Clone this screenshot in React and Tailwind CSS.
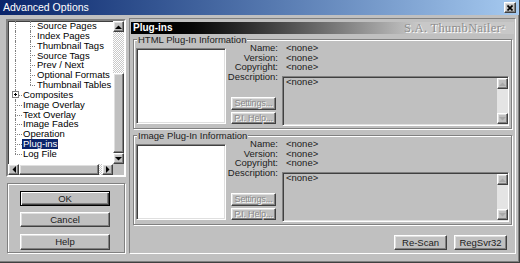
import React from "react";

const raised =
  "border border-t-white border-l-white border-r-[#404040] border-b-[#404040] shadow-[inset_-1px_-1px_0_#808080,inset_1px_1px_0_#dfdfdf]";
const sunken =
  "border border-t-[#808080] border-l-[#808080] border-r-white border-b-white shadow-[inset_1px_1px_0_#404040,inset_-1px_-1px_0_#dfdfdf]";
const etched = "border border-[#808080] shadow-[inset_1px_1px_0_#fff,1px_1px_0_#fff]";
const dither = "bg-[repeating-conic-gradient(#fff_0%_25%,#c8c8c8_0%_50%)] bg-size-[2px_2px]";

const tree = [
  { label: "Source Pages", child: true },
  { label: "Index Pages", child: true },
  { label: "Thumbnail Tags", child: true },
  { label: "Source Tags", child: true },
  { label: "Prev / Next", child: true },
  { label: "Optional Formats", child: true },
  { label: "Thumbnail Tables", child: true, lastChild: true },
  { label: "Composites", plus: true },
  { label: "Image Overlay" },
  { label: "Text Overlay" },
  { label: "Image Fades" },
  { label: "Operation" },
  { label: "Plug-ins", selected: true },
  { label: "Log File", last: true },
];

function Arrow({ dir, color = "#000" }) {
  const pts = {
    up: "0,4 3.5,0.5 7,4",
    down: "0,0 3.5,3.5 7,0",
    left: "4,0 0.5,3.5 4,7",
    right: "0,0 3.5,3.5 0,7",
  }[dir];
  const vertical = dir === "up" || dir === "down";
  return (
    <svg width={vertical ? 7 : 4} height={vertical ? 4 : 7} viewBox={vertical ? "0 0 7 4" : "0 0 4 7"}>
      <polygon points={pts} fill={color} />
    </svg>
  );
}

function ArrowBox({ dir, color }) {
  return (
    <div className={`flex h-[11px] w-[11px] shrink-0 items-center justify-center bg-[#c0c0c0] ${raised}`}>
      <Arrow dir={dir} color={color} />
    </div>
  );
}

function TreeRow({ item }) {
  return (
    <div className="flex h-[9.85px] items-center">
      <div className="relative h-full w-[15px] shrink-0">
        <span
          className={`absolute left-[7px] top-0 border-l border-dotted border-[#808080] ${item.last ? "h-1/2" : "h-full"}`}
        />
        {!item.child && (
          <span className="absolute left-[7px] top-1/2 w-[7px] border-t border-dotted border-[#808080]" />
        )}
        {item.plus && (
          <span className="absolute left-[4px] top-[1px] flex h-[7px] w-[7px] items-center justify-center border border-[#808080] bg-white">
            <span className="absolute h-px w-[3px] bg-black" />
            <span className="absolute h-[3px] w-px bg-black" />
          </span>
        )}
      </div>
      {item.child && (
        <div className="relative h-full w-[14px] shrink-0">
          <span
            className={`absolute left-[7px] top-0 border-l border-dotted border-[#808080] ${item.lastChild ? "h-1/2" : "h-full"}`}
          />
          <span className="absolute left-[7px] top-1/2 w-[5px] border-t border-dotted border-[#808080]" />
        </div>
      )}
      <span
        className={`whitespace-nowrap leading-[9.85px] ${item.selected ? "-ml-[1px] bg-[#0a246a] px-[1px] text-white" : "text-black"}`}
      >
        {item.label}
      </span>
    </div>
  );
}

function WinButton({ children, className = "", isDefault = false }) {
  const frame = isDefault
    ? "border border-black shadow-[inset_1px_1px_0_#fff,inset_-1px_-1px_0_#404040,inset_-2px_-2px_0_#808080]"
    : raised;
  return (
    <div
      className={`flex items-center justify-center whitespace-nowrap bg-[#c0c0c0] leading-none text-[#202020] ${frame} ${className}`}
    >
      {children}
    </div>
  );
}

function DisabledButton({ children, className = "" }) {
  return (
    <div
      className={`flex items-center justify-center whitespace-nowrap bg-[#c0c0c0] text-[9px] leading-none tracking-[-0.2px] text-[#8a8a8a] [text-shadow:1px_1px_0_#fff] ${raised} ${className}`}
    >
      {children}
    </div>
  );
}

function PluginGroup({ title, className = "" }) {
  return (
    <div className={`relative mx-[2px] flex h-[90px] pl-[2px] pr-[2px] pt-[3px] ${etched} ${className}`}>
      <span className="absolute -top-[6px] left-[3px] bg-[#c0c0c0] px-[1px] leading-[11px] text-[#202020]">
        {title}
      </span>
      <div className={`mt-[5px] h-[76px] w-[90px] shrink-0 bg-white ${sunken}`} />
      <div className="flex w-[53px] shrink-0 flex-col pr-[1px] text-right leading-[9.5px] text-[#202020]">
        <span>Name:</span>
        <span>Version:</span>
        <span>Copyright:</span>
        <span>Description:</span>
        <DisabledButton className="mr-[2px] mt-[16px] h-[13px] w-[45px] self-end">Settings...</DisabledButton>
        <DisabledButton className="mr-[2px] mt-[2px] h-[12px] w-[45px] self-end">P.I. Help...</DisabledButton>
      </div>
      <div className="flex flex-1 flex-col pl-[3px] leading-[9.5px] text-[#202020]">
        <span className="pl-[4px]">&lt;none&gt;</span>
        <span className="pl-[4px]">&lt;none&gt;</span>
        <span className="pl-[4px]">&lt;none&gt;</span>
        <div className={`mt-[4.5px] flex h-[50px] bg-[#c0c0c0] ${sunken}`}>
          <span className="flex-1 pl-[3px] pt-[1px] leading-[8px]">&lt;none&gt;</span>
          <div className="flex w-[11px] flex-col py-[1px]">
            <ArrowBox dir="up" color="#a8a8a8" />
            <div className="flex-1 bg-[#e4e4e4]" />
            <ArrowBox dir="down" color="#a8a8a8" />
          </div>
        </div>
      </div>
    </div>
  );
}

export default function App() {
  return (
    <div className="h-[263px] w-[520px] overflow-hidden border-b border-r border-b-[#404040] border-r-[#404040] bg-[#c0c0c0] font-['Liberation_Sans',Arial,sans-serif] text-[9.5px] shadow-[inset_-1px_-1px_0_#808080]">
      {/* Title bar */}
      <div className="flex h-[15px] items-center bg-linear-to-r from-[#0a246a] to-[#a6caf0] pl-[3px] pr-[3px]">
        <span className="flex-1 text-[10.5px] leading-none text-white">Advanced Options</span>
        <div className={`flex h-[11px] w-[12px] items-center justify-center bg-[#c0c0c0] ${raised}`}>
          <svg width="6" height="6" viewBox="0 0 6 6">
            <path d="M0.5 0.5 L5.5 5.5 M5.5 0.5 L0.5 5.5" stroke="#000" strokeWidth="1.6" />
          </svg>
        </div>
      </div>

      <div className="flex pl-[6px] pt-[3px]">
        {/* Left column */}
        <div className="flex w-[120px] shrink-0 flex-col">
          <div className={`mt-[1px] flex h-[158px] flex-col bg-white ${sunken} border-[2px]`}>
            <div className="flex min-h-0 flex-1">
              <div className="flex-1 overflow-hidden">
                {tree.map((item) => (
                  <TreeRow key={item.label} item={item} />
                ))}
              </div>
              <div className="flex w-[11px] flex-col">
                <ArrowBox dir="up" />
                <div className={`h-[41px] ${dither}`} />
                <div className={`flex-1 bg-[#c0c0c0] ${raised}`} />
                <ArrowBox dir="down" />
              </div>
            </div>
            <div className="flex h-[11px]">
              <ArrowBox dir="left" />
              <div className={`w-[80px] bg-[#c0c0c0] ${raised}`} />
              <div className={`flex-1 ${dither}`} />
              <ArrowBox dir="right" />
              <div className="w-[11px] bg-[#c0c0c0]" />
            </div>
          </div>

          <div className={`ml-[1px] mt-[6px] flex h-[70px] w-[118px] flex-col pl-[12px] pt-[7px] ${etched}`}>
            <WinButton isDefault className="h-[15px] w-[90px] text-[#555]">OK</WinButton>
            <WinButton className="mt-[6px] h-[15px] w-[90px]">Cancel</WinButton>
            <WinButton className="mt-[7px] h-[16px] w-[90px]">Help</WinButton>
          </div>
        </div>

        {/* Right panel */}
        <div className="ml-[3px] flex h-[236px] w-[387px] flex-col border border-b-white border-l-[#808080] border-r-white border-t-[#808080] px-[1px] pt-[3px]">
          <div className="flex h-[12px] items-center bg-linear-to-r from-black from-5% to-[#c8c8c8] to-75% pl-[2px] pr-[9px]">
            <span className="flex-1 text-[10px] font-bold leading-none text-white">Plug-ins</span>
            <span className="font-['Liberation_Serif',serif] text-[12.5px] leading-[12px] tracking-[0.3px] text-[#8e8e8e] [text-shadow:1px_1px_0_#fff]">
              S.A. ThumbNailer<sup className="text-[7px]">2</sup>
            </span>
          </div>
          <PluginGroup title="HTML Plug-In Information" className="mt-[5px]" />
          <PluginGroup title="Image Plug-In Information" className="mt-[6px]" />
          <div className="mt-[10px] flex justify-end gap-[7px] pr-[7px]">
            <WinButton className="h-[15px] w-[53px]">Re-Scan</WinButton>
            <WinButton className="h-[15px] w-[53px]">RegSvr32</WinButton>
          </div>
        </div>
      </div>
    </div>
  );
}
